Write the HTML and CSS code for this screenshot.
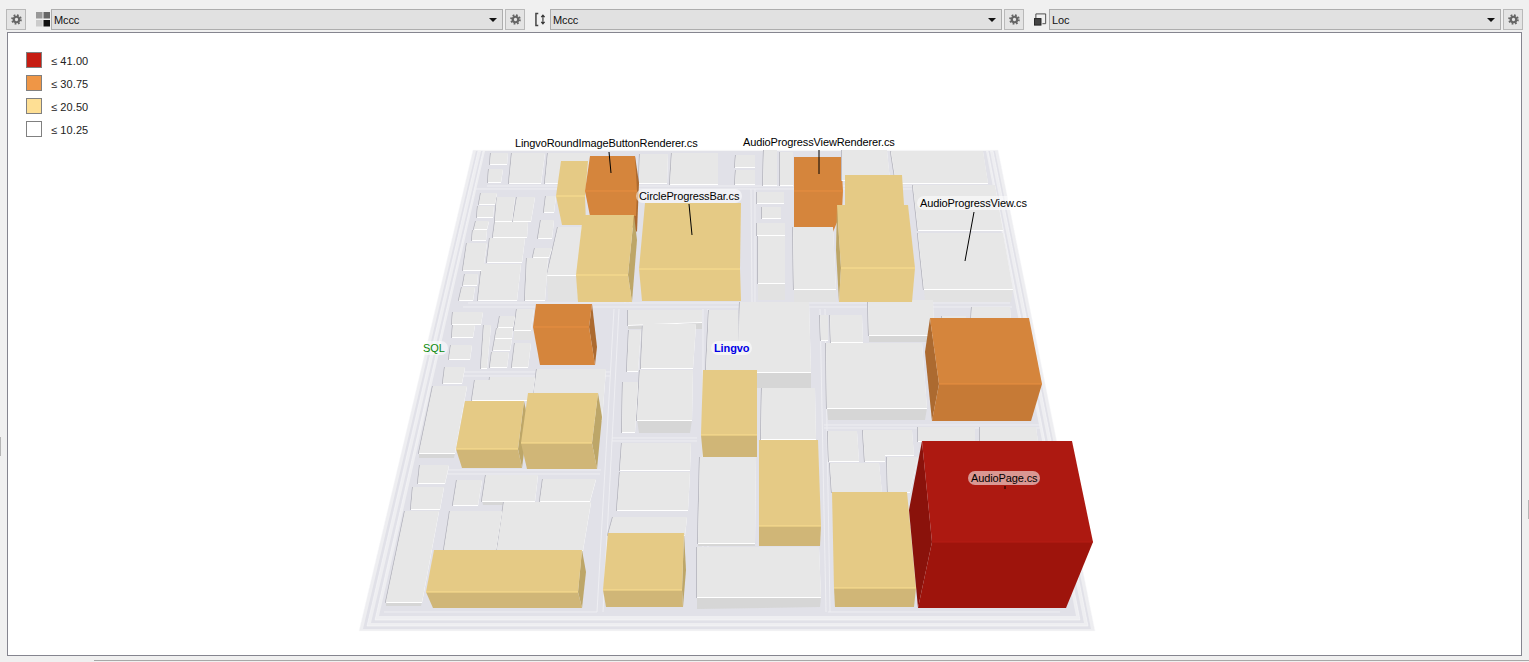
FILE: index.html
```html
<!DOCTYPE html>
<html lang="en">
<head>
    <meta charset="UTF-8">
    <title>Code City</title>
    <link rel="stylesheet" href="styles.css">
</head>
<body>
    <svg class="defs" width="0" height="0">
        <symbol id="gear" viewBox="0 0 12 12">
            <circle cx="6" cy="6" r="3" fill="none" stroke="#666" stroke-width="2.4"/>
            <circle cx="6" cy="6" r="4.8" fill="none" stroke="#666" stroke-width="2" stroke-dasharray="1.9 1.87"/>
        </symbol>
    </svg>

    <div class="toolbar">
        <button class="gear-btn"><svg class="gear"><use href="#gear"/></svg></button>

        <svg class="metric-icon first" viewBox="0 0 15 15">
            <rect x="0" y="0" width="6.5" height="6.5" fill="#999"/>
            <rect x="7.5" y="0" width="6.5" height="6.5" fill="#666"/>
            <rect x="0" y="8" width="6.5" height="6.5" fill="#ccc"/>
            <rect x="7.5" y="8" width="6.5" height="6.5" fill="#111"/>
        </svg>
        <div class="combo"><span>Mccc</span><i class="arrow"></i></div>
        <button class="gear-btn"><svg class="gear"><use href="#gear"/></svg></button>

        <svg class="metric-icon" viewBox="0 0 15 15">
            <path d="M3.5 1H1v13h2.5" fill="none" stroke="#444" stroke-width="1.6"/>
            <path d="M8.5 3v9M6.7 5l1.8-2.2L10.300 5M6.700 10l1.800 2.200 1.800-2.200" fill="none" stroke="#333" stroke-width="1.200"/>
        </svg>
        <div class="combo"><span>Mccc</span><i class="arrow"></i></div>
        <button class="gear-btn"><svg class="gear"><use href="#gear"/></svg></button>

        <svg class="metric-icon" viewBox="0 0 15 15">
            <path d="M2 6V1.500h10.500V12H9" fill="none" stroke="#444" stroke-width="1"/>
            <rect x="0.500" y="6.500" width="7" height="7" fill="#444" stroke="#222"/>
        </svg>
        <div class="combo"><span>Loc</span><i class="arrow"></i></div>
        <button class="gear-btn"><svg class="gear"><use href="#gear"/></svg></button>
    </div>

    <main class="canvas">
        <svg class="city" viewBox="8 33 1513 622" width="1513" height="622">
            <polygon class="plate" points="473,150 998,150 1095,631 359,631"/>
            <polygon class="step" points="476,151 995,151 1091,629 363,629"/>
            <polygon class="plate" points="478,151 993,151 1088,626 367,626"/>
            <polygon class="step" points="481,151 990,151 1084,623 371,623"/>
            <polygon class="plate" points="483,151 988,151 1080,620 375,620"/>
            <polygon class="step" points="485,151 986,151 1076,616 379,616"/>

            <path class="lanes" d="M487 186H988M475 189H990M468 303H1010M463 307H1012M614 309 597 612M619 309 603 612M703 309V608M708 309V608M820 309 826 612M825 309 830 612M824 425H1040M824 428H1042M447 470H601M445 474H600M612 438H697M612 441H697M633 189 630 303M628 189 625 303M751 189 752 303M755 189V303M453 372H610M450 376H610M384 612H597M828 612H1060"/>

            <!-- sits behind the low white block below it -->
            <g class="tower orange flat">
                <path class="top" d="M794 157H841L843 191H794Z"/>
                <path class="front" d="M794 191H843L842 210 833 232H794Z"/>
                <path class="edge" d="M794 191H843"/>
            </g>

            <path class="low-front pale" d="M547 275H577L578 301H548ZM514 330H531V340H514ZM758 283H785V300H758ZM794 289H836L836 302H794ZM924 289H1013L1011 302H925Z"/>
            <path class="low-front" d="M482 501H535L536 505H483ZM419 453H455L454 458H419ZM386 602H422L421 606H386ZM628 325 702 322V329H628ZM738 372H811L811 388H738ZM637 420H692L690 433H639ZM698 543H755V546H698ZM697 597H821L820 607 697 609ZM869 335H934V342H869ZM827 408H927L925 420H828Z"/>
            <path class="low" d="M491 153H508L507 164H490ZM489 169H503L501 182H488ZM512 153H545L541 183H509ZM548 153H590V183H545ZM640 154H668L667 183H639ZM672 153H718V184H670ZM481 193H497L495 204H479ZM478 206H494L493 217H477ZM497 197H515L512 221H495ZM517 197H535L531 221H513ZM546 196H556L554 212H544ZM476 221H489L487 229H474ZM473 230H487L486 240H472ZM495 222H528L527 237H493ZM467 243H487L483 270H463ZM490 238H525L522 262H487ZM541 220H554L552 238H538ZM535 248H552L549 257H533ZM527 258H548L545 300H525ZM465 274H478L477 285H463ZM462 287H475L473 300H459ZM482 264H521L517 300H478ZM558 227H582L577 275H547ZM453 312H483L481 324H452ZM453 325H475L473 337H452ZM451 345H472L470 359H449ZM500 316H515L513 327H498ZM497 328H513L512 338H495ZM495 339H512L510 350H493ZM492 352H509L507 367H490ZM517 309H534L531 330H514ZM515 343H531L528 367H512ZM484 325H491L487 368H481ZM445 367H465L462 383H443ZM537 369H606L602 420H530ZM490 377H535L532 400H488ZM475 380H491L488 400H472ZM433 386H467L455 453H419ZM420 465H449L445 483H418ZM413 487H444L440 509H411ZM405 511H439L422 602H386ZM457 480H482L478 505H453ZM486 475H538L535 501H482ZM543 479H596L590 501H540ZM504 502H591L583 550H497ZM450 511H502L496 550H444ZM628 310H702V322L628 325ZM629 330H641L638 371H627ZM643 324H696L693 368H641ZM709 310H738L739 370H706ZM740 302H809L811 372H738ZM623 382H638L635 432H622ZM640 370H693L692 420H637ZM622 443H691L690 470H620ZM620 472H690L688 510H617ZM613 517H687L685 535H608ZM762 388H815L816 439H761ZM700 457H756L755 543H698ZM697 547H819L821 597H697ZM757 192H784V203H757ZM762 207H781V218H762ZM757 223H785V235H757ZM758 236H785V283H758ZM764 150H777V185H763ZM780 152H793V185H780ZM736 155H755V167H735ZM736 170H755V184H735ZM793 227H833L836 289H794ZM842 150H887L890 180H842ZM891 151H983L988 183H896ZM913 185H995L1003 230H918ZM918 233H1003L1013 289H924ZM868 300H933L934 335H869ZM820 315H828V340H821ZM830 315H862L863 342H831ZM826 343H922L927 408H827ZM942 316H966V322H942ZM972 307H1010L1011 322H971ZM828 431H857L859 461H829ZM863 430H912L914 455H885V461H865ZM918 427H975V441H918ZM980 427H1036L1038 441H980ZM887 457H918L910 492H888ZM830 463H879L882 492H832Z"/>

            <g class="tower yellow flat">
                <path class="top" d="M561 161H588L585 196H556Z"/>
                <path class="front" d="M556 196H585L586 225H562Z"/>
                <path class="edge" d="M556 196H585"/>
            </g>
            <g class="tower orange flat">
                <path class="side" d="M635 156 639 183 637 232 630 225V191Z"/>
                <path class="top" d="M590 156H635L637 191H585Z"/>
                <path class="front" d="M585 191H637L636 216H590Z"/>
                <path class="edge" d="M585 191H637"/>
            </g>
            <g class="tower yellow flat">
                <path class="side" d="M634 215 637 240 632 302 628 275Z"/>
                <path class="top" d="M583 215H634L628 275H576Z"/>
                <path class="front" d="M576 275H628L632 302H578Z"/>
                <path class="edge" d="M576 275H628"/>
            </g>
            <g class="tower yellow flat">
                <path class="top" d="M645 203H741L740 269H639Z"/>
                <path class="front" d="M639 269H740L741 301H642Z"/>
                <path class="edge" d="M639 269H740"/>
            </g>
            <g class="tower yellow flat">
                <path class="top" d="M845 175H902L904 205H845Z"/>
            </g>
            <g class="tower yellow flat">
                <path class="side" d="M837 205 841 268 839 302 836 250Z"/>
                <path class="top" d="M837 205H908L915 268H841Z"/>
                <path class="front" d="M841 268H915L912 302H839Z"/>
                <path class="edge" d="M841 268H915"/>
            </g>
            <g class="tower orange flat">
                <path class="side" d="M592 304 597 347 595 365 589 327Z"/>
                <path class="top" d="M536 304H592L589 327H533Z"/>
                <path class="front" d="M533 327H589L595 365H540Z"/>
                <path class="edge" d="M533 327H589"/>
            </g>
            <g class="tower yellow">
                <path class="side" d="M524 401 528 420 522 468 518 449Z"/>
                <path class="top" d="M465 401H524L518 449H456Z"/>
                <path class="front" d="M456 449H518L522 468H462Z"/>
                <path class="edge" d="M456 449H518"/>
            </g>
            <g class="tower yellow">
                <path class="side" d="M598 393 602 417 597 469 592 443Z"/>
                <path class="top" d="M528 393H598L592 443H521Z"/>
                <path class="front" d="M521 443H592L597 469H527Z"/>
                <path class="edge" d="M521 443H592"/>
            </g>
            <g class="tower yellow">
                <path class="top" d="M703 370H757V435H701Z"/>
                <path class="front" d="M701 435H757V457H703Z"/>
                <path class="edge" d="M701 435H757"/>
            </g>
            <g class="tower yellow">
                <path class="top" d="M759 440H818L821 526H759Z"/>
                <path class="front" d="M759 526H821L820 546H759Z"/>
                <path class="edge" d="M759 526H821"/>
            </g>
            <g class="tower orange">
                <path class="side" d="M930 318 939 384 932 421 925 352Z"/>
                <path class="top" d="M930 318H1029L1042 384H939Z"/>
                <path class="front" d="M939 384H1042L1031 421H932Z"/>
                <path class="edge" d="M939 384H1042"/>
            </g>
            <g class="tower yellow">
                <path class="side" d="M582 550 586 572 582 608 578 592Z"/>
                <path class="top" d="M434 550H582L578 592H426Z"/>
                <path class="front" d="M426 592H578L582 608H433Z"/>
                <path class="edge" d="M426 592H578"/>
            </g>
            <g class="tower yellow">
                <path class="side" d="M684 533 686 570 683 607 682 590Z"/>
                <path class="top" d="M608 533H684L682 590H603Z"/>
                <path class="front" d="M603 590H682L683 607H606Z"/>
                <path class="edge" d="M603 590H682"/>
            </g>
            <g class="tower yellow">
                <path class="top" d="M832 492H907L916 588H834Z"/>
                <path class="front" d="M834 588H916L914 607H835Z"/>
                <path class="edge" d="M834 588H916"/>
            </g>
            <g class="tower red">
                <path class="side" d="M922 441 932 542 918 608 909 510Z"/>
                <path class="top" d="M922 441H1072L1093 542H932Z"/>
                <path class="front" d="M932 542H1093L1066 608H918Z"/>
                <path class="edge" d="M932 542H1093"/>
            </g>

            <path class="leader" d="M609 152 611 173M689 204 692 235M819 150V174M974 212 965 261M1005 486V489"/>
        </svg>

        <ul class="legend">
            <li><i class="swatch red-swatch"></i>≤ 41.00</li>
            <li><i class="swatch orange-swatch"></i>≤ 30.75</li>
            <li><i class="swatch yellow-swatch"></i>≤ 20.50</li>
            <li><i class="swatch"></i>≤ 10.25</li>
        </ul>

        <span class="tag tag-round">LingvoRoundImageButtonRenderer.cs</span>
        <span class="tag tag-renderer">AudioProgressViewRenderer.cs</span>
        <span class="tag tag-circle">CircleProgressBar.cs</span>
        <span class="tag tag-view">AudioProgressView.cs</span>
        <span class="tag tag-sql">SQL</span>
        <span class="tag tag-lingvo">Lingvo</span>
        <span class="tag tag-page">AudioPage.cs</span>
    </main>

    <div class="status-line"></div>
    <i class="grip grip-left"></i>
    <i class="grip grip-right"></i>
</body>
</html>
```

FILE: styles.css
```css
html, body {
    height: 100%;
}

body {
    font-family: 'Liberation Sans', Arial, sans-serif;
    font-size: 11px;
    letter-spacing: -0.12px;
    background: #f0f0f0;
    color: #000;
    margin: 0;
    height: 100vh;
    display: flex;
    flex-direction: column;
    overflow: hidden;
    position: relative;
}

.defs {
    position: absolute;
}

.toolbar {
    display: flex;
    align-items: center;
    height: 21px;
    margin: 9px 0 2px;
    padding-left: 6px;
}

.gear-btn {
    width: 20px;
    height: 21px;
    padding: 0;
    flex: none;
    background: #e4e4e4;
    border: 1px solid #b9b9b9;
    display: flex;
    align-items: center;
    justify-content: center;
}

.gear {
    width: 11px;
    height: 11px;
}

.metric-icon {
    width: 14px;
    height: 15px;
    flex: none;
    margin: 0 1px 0 10px;
}

.metric-icon.first {
    width: 15px;
    margin-right: 0;
}

.combo {
    width: 452px;
    height: 21px;
    flex: none;
    box-sizing: border-box;
    margin-right: 2px;
    padding: 0 4px 0 2px;
    background: #e1e1e1;
    border: 1px solid #adadad;
    display: flex;
    align-items: center;
    justify-content: space-between;
    color: #111;
}

.arrow {
    width: 0;
    height: 0;
    margin-right: 1px;
    border-left: 4px solid transparent;
    border-right: 4px solid transparent;
    border-top: 4px solid #111;
}

.canvas {
    position: relative;
    flex: 1;
    margin: 0 7px;
    background: #fff;
    border: 1px solid #85858f;
    overflow: hidden;
}

.city {
    position: absolute;
    left: 0;
    top: 0;
}

.plate {
    fill: #eeeef1;
    stroke: #f8f8fa;
    stroke-width: 0.5;
}

.step {
    fill: #e1e1e8;
}

.lanes {
    fill: none;
    stroke: #eeeef2;
    stroke-width: 1;
}

.low {
    fill: #e7e7e7;
    filter: drop-shadow(0 1px 0 #fff) drop-shadow(-1px 0 0 #bcbcc4);
}

.low-front {
    fill: #d6d6d6;
}

.low-front.pale {
    fill: #e2e2e2;
}

.yellow .top { fill: #e5ca85; }
.yellow .front { fill: #d0b677; }
.yellow .side { fill: #bda668; }
.yellow .edge { stroke: #fbdf90; }
.yellow.flat .front { fill: #e5ca85; }

.orange .top { fill: #d5853c; }
.orange .front { fill: #c67a36; }
.orange .side { fill: #ac6a30; }
.orange .edge { stroke: #e88e40; }
.orange.flat .front { fill: #d5853c; }

.red .top { fill: #ad1911; }
.red .front { fill: #9e140c; }
.red .side { fill: #8a120b; }
.red .edge { stroke: #b51d14; }

.edge {
    fill: none;
    stroke-width: 1;
}

.leader {
    fill: none;
    stroke: #000;
    stroke-width: 1;
}

.legend {
    position: relative;
    list-style: none;
    margin: 0;
    padding: 20px 0 0 18px;
    letter-spacing: 0.1px;
}

.legend li {
    display: flex;
    align-items: center;
    height: 16px;
    margin-bottom: 7px;
    color: #222;
}

.swatch {
    width: 14px;
    height: 14px;
    margin: -2px 9px 0 0;
    background: #fff;
    border: 1px solid #808080;
}

.red-swatch { background: #c61c12; }
.orange-swatch { background: #ef9646; }
.yellow-swatch { background: #fedf94; }

/* labels hang over the city, so these are placed on the canvas */
.tag {
    position: absolute;
    padding: 0 3px;
    line-height: 14px;
    white-space: nowrap;
    background: rgba(255, 255, 255, 0.55);
    border-radius: 7px;
}

.tag-round { left: 504px; top: 103px; }
.tag-renderer { left: 732px; top: 102px; }
.tag-circle { left: 628px; top: 156px; }
.tag-view { left: 909px; top: 163px; }
.tag-sql { left: 412px; top: 308px; color: #0a8a0a; }
.tag-lingvo { left: 703px; top: 308px; color: #0000e6; font-weight: bold; }
.tag-page { left: 960px; top: 438px; }

.status-line {
    height: 1px;
    margin: 4px 0 1px 94px;
    background: #a8a8a8;
}

.grip {
    position: absolute;
    width: 1px;
    height: 19px;
    background: #b5b5b5;
}

.grip-left { left: 0; top: 437px; }
.grip-right { right: 0; top: 500px; }
```
